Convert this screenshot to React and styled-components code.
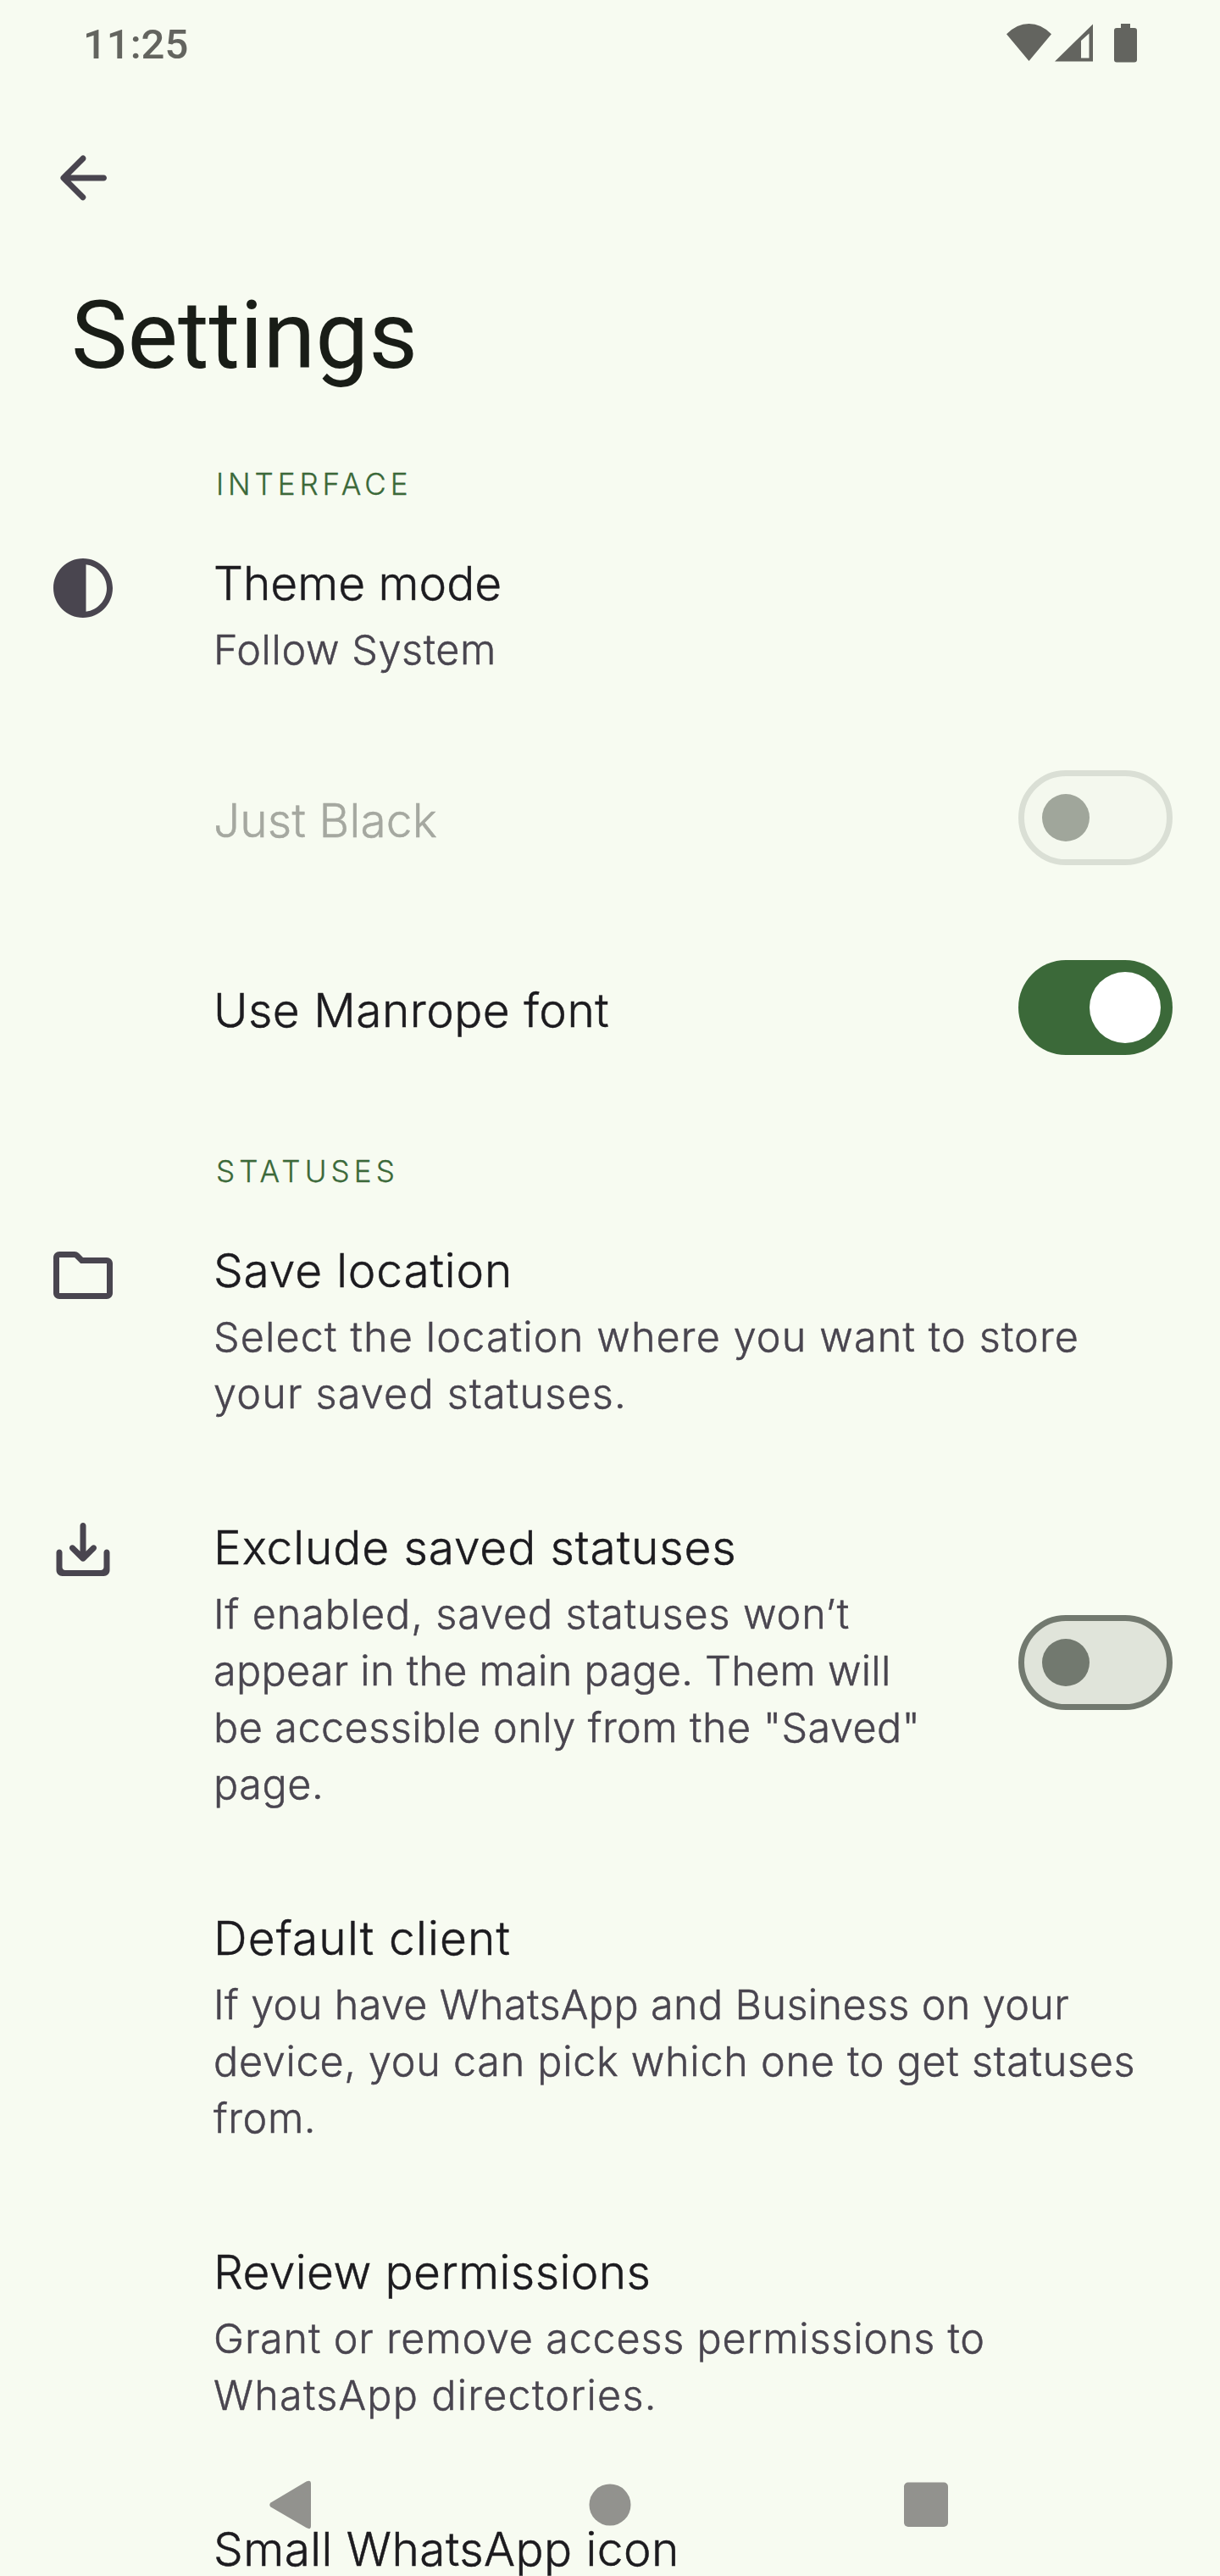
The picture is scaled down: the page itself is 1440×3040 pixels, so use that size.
import React from "react";
import styled, { createGlobalStyle } from "styled-components";

const Global = createGlobalStyle`
  * { box-sizing: border-box; }
  body { margin: 0; background: #f7fbf1; }
`;

const Screen = styled.div`
  position: relative;
  display: flex;
  flex-direction: column;
  width: 1440px;
  height: 3040px;
  overflow: hidden;
  background: #f7fbf1;
  font-family: Inter, "Liberation Sans", sans-serif;
  font-weight: 300;
`;

const StatusBar = styled.header`
  display: flex;
  justify-content: space-between;
  flex: none;
  height: 112px;
  padding: 24px 96px 0 98px;
  color: #63645f;
  svg { display: block; }
`;

const Clock = styled.time`
  font: 500 49px/58px Roboto, sans-serif;
`;

const TopBar = styled.nav`
  flex: none;
  height: 224px;
  padding: 56px 56px 0;
  color: #49454f;
  svg { display: block; }
`;

const Heading = styled.h1`
  flex: none;
  height: 214px;
  margin: 0;
  padding-left: 84px;
  font: 400 112px/120px Roboto, sans-serif;
  color: #191d17;
`;

const SectionLabel = styled.h2`
  flex: none;
  height: 43px;
  margin: ${(p) => p.$gap ?? 0}px 0 17px 255px;
  font-size: 35px;
  line-height: 43px;
  font-weight: 300;
  letter-spacing: ${(p) => p.$track}px;
  color: #3b6939;
  -webkit-text-stroke: 0.3px currentColor;
`;

const Row = styled.section`
  display: flex;
  flex: none;
  height: ${(p) => p.$h}px;
  padding: 0 56px ${(p) => p.$pb ?? 0}px;
`;

const IconSlot = styled.div`
  flex: none;
  width: 196px;
  padding-top: 42px;
  color: #49454f;
  svg { display: block; }
`;

const Copy = styled.div`
  flex: 1;
  padding-top: ${(p) => p.$top ?? 42}px;
  min-width: 0;
  -webkit-text-stroke: 0.5px currentColor;
`;

const Label = styled.div`
  height: 81px;
  font-size: 55px;
  line-height: 72px;
  white-space: nowrap;
  letter-spacing: ${(p) => p.$track}px;
  color: ${(p) => (p.$disabled ? "#a5a8a0" : "#1c1b1f")};
`;

const Line = styled.div`
  height: 67px;
  font-size: 48.5px;
  line-height: 67px;
  white-space: nowrap;
  letter-spacing: ${(p) => p.$track}px;
  color: #49454f;
`;

const Track = styled.div`
  flex: none;
  align-self: center;
  display: flex;
  align-items: center;
  justify-content: ${(p) => (p.$kind === "on" ? "flex-end" : "flex-start")};
  width: 182px;
  height: 112px;
  padding: 0 ${(p) => (p.$kind === "on" ? 14 : 21)}px;
  border-radius: 56px;
  border: ${(p) =>
    ({ on: "0", off: "7px solid #72796f", disabled: "7px solid #dadfd5" })[p.$kind]};
  background: ${(p) =>
    ({ on: "#3b6939", off: "#e0e4da", disabled: "#f4f8ee" })[p.$kind]};
`;

const Thumb = styled.span`
  width: ${(p) => (p.$kind === "on" ? 84 : 56)}px;
  height: ${(p) => (p.$kind === "on" ? 84 : 56)}px;
  border-radius: 50%;
  background: ${(p) => ({ on: "#fff", off: "#72796f", disabled: "#a0a69b" })[p.$kind]};
`;

const NavOverlay = styled.footer`
  position: absolute;
  left: 0;
  bottom: 0;
  width: 1440px;
  height: 168px;
  svg { display: block; }
`;

const Icon = ({ children }) => (
  <svg width="84" height="84" viewBox="0 0 24 24" fill="currentColor">
    {children}
  </svg>
);

const ContrastIcon = () => (
  <Icon>
    <path d="M12 22c5.52 0 10-4.48 10-10S17.52 2 12 2 2 6.48 2 12s4.48 10 10 10zm1-17.93c3.94.49 7 3.85 7 7.93s-3.05 7.44-7 7.93V4.07z" />
  </Icon>
);

const FolderIcon = () => (
  <Icon>
    <path d="M9.17 6l2 2H20v10H4V6h5.17M9.17 4H4c-1.100 0-1.990.9-1.990 2L2 18c0 1.100.9 2 2 2h16c1.100 0 2-.9 2-2V8c0-1.100-.9-2-2-2h-8l-1.410-1.410A2 2 0 0 0 9.170 4z" />
  </Icon>
);

const SaveIcon = () => (
  <Icon>
    <path
      transform="translate(0 -1)"
      d="M19 13v5c0 .55-.45 1-1 1H6c-.55 0-1-.45-1-1v-5c0-.55-.45-1-1-1s-1 .45-1 1v6c0 1.1.9 2 2 2h14c1.1 0 2-.9 2-2v-6c0-.55-.45-1-1-1s-1 .45-1 1zm-6-.33l1.88-1.88c.39-.39 1.02-.39 1.41 0 .39.39.39 1.02 0 1.41l-3.59 3.59c-.39.39-1.02.39-1.41 0L7.7 12.2c-.39-.39-.39-1.02 0-1.41.39-.39 1.02-.39 1.41 0L11 12.67V4c0-.55.45-1 1-1s1 .45 1 1v8.67z"
    />
  </Icon>
);

const Setting = ({ icon, label, track = 0, lines = [], h, top, pb, kind, disabled }) => (
  <Row $h={h} $pb={pb}>
    <IconSlot>{icon}</IconSlot>
    <Copy $top={top}>
      <Label $track={track} $disabled={disabled}>{label}</Label>
      {lines.map(([text, t]) => (
        <Line key={text} $track={t}>{text}</Line>
      ))}
    </Copy>
    {kind && (
      <Track $kind={kind}>
        <Thumb $kind={kind} />
      </Track>
    )}
  </Row>
);

export default function App() {
  return (
    <Screen>
      <Global />
      <StatusBar>
        <Clock>11:25</Clock>
        <svg width="158" height="56" viewBox="1186 24 158 56" fill="currentColor">
          <path d="M1188 40.300Q1200 28 1214.500 28T1241 40.300L1214.500 72Z" />
          <path fillRule="evenodd" d="M1245 72.500L1290 28.500V72.500ZM1276 48V68.500H1285.500V39.500Z" />
          <path d="M1323 28h11v5h5q3 0 3 3v34.500q0 3-3 3h-21q-3 0-3-3V36q0-3 3-3h5z" />
        </svg>
      </StatusBar>
      <TopBar>
        <Icon>
          <path d="M19 11H7.830l4.880-4.880c.39-.39.39-1.030 0-1.420a1 1 0 0 0-1.410 0l-6.590 6.590a1 1 0 0 0 0 1.410l6.590 6.590a1 1 0 0 0 1.410-1.410L7.830 13H19c.55 0 1-.45 1-1s-.45-1-1-1z" />
        </Icon>
      </TopBar>
      <Heading>Settings</Heading>
      <SectionLabel $track={4.9}>INTERFACE</SectionLabel>
      <Setting
        icon={<ContrastIcon />}
        label="Theme mode"
        track={0}
        h={243}
        lines={[["Follow System", 0.6]]}
      />
      <Setting label="Just Black" track={0.15} h={224} top={79} kind="disabled" disabled />
      <Setting label="Use Manrope font" track={0.5} h={224} top={79} kind="on" />
      <SectionLabel $track={5.1} $gap={60}>STATUSES</SectionLabel>
      <Setting
        icon={<FolderIcon />}
        label="Save location"
        track={0.85}
        h={327}
        lines={[
          ["Select the location where you want to store", 1.15],
          ["your saved statuses.", 1.22],
        ]}
      />
      <Setting
        icon={<SaveIcon />}
        label="Exclude saved statuses"
        track={0.91}
        h={461}
        pb={33}
        kind="off"
        lines={[
          ["If enabled, saved statuses won’t", 0.9],
          ["appear in the main page. Them will", 0.28],
          ['be accessible only from the "Saved"', 0.46],
          ["page.", 0.6],
        ]}
      />
      <Setting
        label="Default client"
        track={1.15}
        h={394}
        lines={[
          ["If you have WhatsApp and Business on your", 0.38],
          ["device, you can pick which one to get statuses", 0.73],
          ["from.", 0.6],
        ]}
      />
      <Setting
        label="Review permissions"
        track={0.43}
        h={327}
        lines={[
          ["Grant or remove access permissions to", 0.81],
          ["WhatsApp directories.", 1.27],
        ]}
      />
      <Setting label="Small WhatsApp icon" track={0.45} h={200} />
      <NavOverlay>
        <svg width="1440" height="168" viewBox="0 2872 1440 168" fill="#92928e">
          <path d="M319.500 2953.500L361.500 2928.500Q367 2926 367 2931V2981Q367 2986 361.500 2983L319.500 2958.500Q317 2956 319.500 2953.500Z" />
          <circle cx="720" cy="2956" r="24.500" />
          <rect x="1067" y="2929.500" width="52" height="52.500" rx="5" />
        </svg>
      </NavOverlay>
    </Screen>
  );
}
